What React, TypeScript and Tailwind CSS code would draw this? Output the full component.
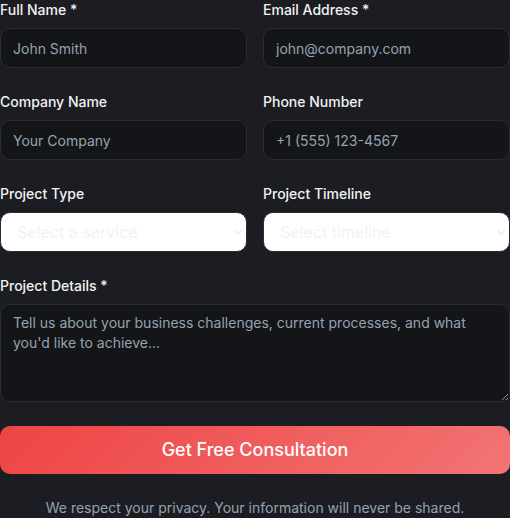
import type { InputHTMLAttributes } from "react";

const label = "block text-sm font-medium leading-5 text-[#f2f2f2]";
const control =
  "block w-full rounded-[10px] border border-[#2a2c33] bg-[#141519] text-sm leading-5 text-[#f2f2f2] placeholder:text-[#94a3b0] outline-none";

type FieldProps = InputHTMLAttributes<HTMLInputElement> & { id: string; text: string };

function Field({ id, text, ...rest }: FieldProps) {
  return (
    <div>
      <label htmlFor={id} className={label}>{text}</label>
      <input id={id} className={`${control} mt-2 h-10 px-3 py-2`} {...rest} />
    </div>
  );
}

function Choice({ id, text, options }: { id: string; text: string; options: string[] }) {
  return (
    <div>
      <label htmlFor={id} className={label}>{text}</label>
      <select
        id={id}
        className="mt-2 block h-10 w-full rounded-[10px] border border-[#2a2c33] bg-white px-3 text-base text-[#f2f2f2] outline-none"
      >
        {options.map((o) => (
          <option key={o}>{o}</option>
        ))}
      </select>
    </div>
  );
}

export default function App() {
  return (
    <main className="min-h-screen overflow-hidden bg-[#1c1d22] font-['Inter',sans-serif]">
      <form className="flex flex-col gap-6" onSubmit={(e) => e.preventDefault()}>
        <div className="grid grid-cols-2 gap-x-4 gap-y-6">
          <Field id="name" text="Full Name *" placeholder="John Smith" />
          <Field id="email" type="email" text="Email Address *" placeholder="john@company.com" />
          <Field id="company" text="Company Name" placeholder="Your Company" />
          <Field id="phone" type="tel" text="Phone Number" placeholder="+1 (555) 123-4567" />
          <Choice id="type" text="Project Type" options={["Select a service", "Automation", "Web Development"]} />
          <Choice id="timeline" text="Project Timeline" options={["Select timeline", "1-3 months", "3-6 months"]} />
        </div>
        <div>
          <label htmlFor="details" className={label}>Project Details *</label>
          <textarea
            id="details"
            rows={4}
            className={`${control} mt-2 px-3 py-2`}
            placeholder="Tell us about your business challenges, current processes, and what you'd like to achieve..."
          />
        </div>
        <button
          type="submit"
          className="h-12 w-full rounded-[10px] bg-[linear-gradient(135deg,#ef4444,#f27474)] text-lg font-medium text-white"
        >
          Get Free Consultation
        </button>
        <p className="text-center text-sm leading-5 text-[#94a3b0]">
          We respect your privacy. Your information will never be shared.
        </p>
      </form>
    </main>
  );
}
